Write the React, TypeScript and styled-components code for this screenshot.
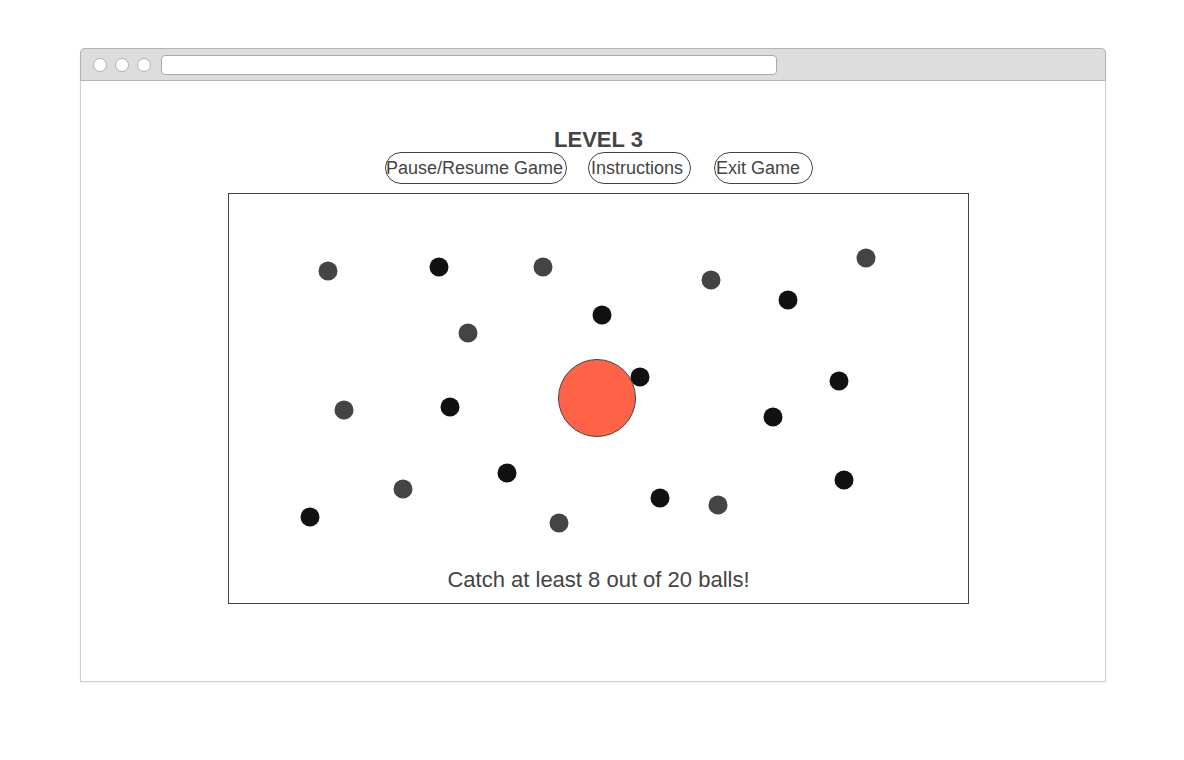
import React from "react";
import styled, { createGlobalStyle } from "styled-components";

const Global = createGlobalStyle`
  html, body { margin: 0; padding: 0; background: #fff; }
  body { font-family: "Liberation Sans", Arial, sans-serif; }
`;

const Page = styled.div`
  padding: 48px 0 0 80px;
  width: 1184px;
  height: 760px;
  box-sizing: border-box;
`;

const Window = styled.div`
  width: 1026px;
  height: 634px;
  box-sizing: border-box;
  border: 1px solid #cfcfcf;
  border-top: none;
  border-radius: 5px 5px 0 0;
  display: flex;
  flex-direction: column;
  box-shadow: 0 1px 3px rgba(0, 0, 0, 0.06);
`;

const TitleBar = styled.div`
  height: 33px;
  box-sizing: border-box;
  background: #dddddd;
  border: 1px solid #b4b4b4;
  margin: 0 -1px;
  border-radius: 5px 5px 0 0;
  display: flex;
  align-items: center;
  padding-left: 12px;
  gap: 8px;
`;

const Dot = styled.span`
  width: 14px;
  height: 14px;
  box-sizing: border-box;
  border-radius: 50%;
  background: #fff;
  border: 1px solid #b0b0b0;
`;

const Address = styled.div`
  margin-left: 2px;
  width: 616px;
  height: 20px;
  box-sizing: border-box;
  background: #fff;
  border: 1px solid #aaaaaa;
  border-radius: 4px;
`;

const Content = styled.div`
  padding: 46px 0 0 147px;
  display: flex;
  flex-direction: column;
  align-items: flex-start;
`;

const Column = styled.div`
  width: 741px;
  display: flex;
  flex-direction: column;
  align-items: center;
`;

const Heading = styled.h1`
  margin: 0;
  font-size: 22px;
  line-height: 25px;
  font-weight: bold;
  color: #444;
`;

const ButtonRow = styled.div`
  display: flex;
  align-items: center;
  margin-left: 1px;
`;

const GameButton = styled.button<{ $w: number; $pl: number; $gap: number }>`
  width: ${(p) => p.$w}px;
  height: 32px;
  margin-left: ${(p) => p.$gap}px;
  box-sizing: border-box;
  padding: 0 0 0 ${(p) => p.$pl}px;
  background: #fff;
  border: 1px solid #444;
  border-radius: 16px;
  font-family: "Liberation Sans", Arial, sans-serif;
  font-size: 18px;
  color: #444;
  text-align: left;
  white-space: nowrap;
  display: flex;
  align-items: center;
`;

const Board = styled.div`
  position: relative;
  margin-top: 9px;
  width: 741px;
  height: 411px;
  box-sizing: border-box;
  border: 1px solid #444;
  display: flex;
  flex-direction: column;
  justify-content: flex-end;
  align-items: center;
  padding-bottom: 11px;
`;

const Ball = styled.span<{ $dark: boolean }>`
  position: absolute;
  width: 19px;
  height: 19px;
  border-radius: 50%;
  background: ${(p) => (p.$dark ? "#111" : "#444")};
  transform: translate(-50%, -50%);
`;

const Catcher = styled.span`
  position: absolute;
  width: 78px;
  height: 78px;
  box-sizing: border-box;
  border-radius: 50%;
  background: #ff6347;
  border: 1px solid #444;
  transform: translate(-50%, -50%);
`;

const Goal = styled.div`
  font-size: 22px;
  line-height: 25px;
  color: #444;
`;

const OX = 229;
const OY = 194;

const balls: [number, number, boolean][] = [
  [328, 271, false],
  [543, 267, false],
  [711, 280, false],
  [866, 258, false],
  [468, 333, false],
  [344, 410, false],
  [403, 489, false],
  [559, 523, false],
  [718, 505, false],
  [439, 267, true],
  [788, 300, true],
  [602, 315, true],
  [640, 377, true],
  [450, 407, true],
  [839, 381, true],
  [773, 417, true],
  [507, 473, true],
  [310, 517, true],
  [660, 498, true],
  [844, 480, true],
];

export default function App() {
  return (
    <>
      <Global />
      <Page>
        <Window>
          <TitleBar>
            <Dot />
            <Dot />
            <Dot />
            <Address />
          </TitleBar>
          <Content>
            <Column>
              <Heading>LEVEL 3</Heading>
              <ButtonRow>
                <GameButton $w={182} $pl={0} $gap={0}>Pause/Resume Game</GameButton>
                <GameButton $w={103} $pl={2} $gap={21}>Instructions</GameButton>
                <GameButton $w={99} $pl={1} $gap={23}>Exit Game</GameButton>
              </ButtonRow>
              <Board>
                {balls.map(([x, y, d], i) => (
                  <Ball key={i} $dark={d} style={{ left: x - OX, top: y - OY }} />
                ))}
                <Catcher style={{ left: 597 - OX, top: 398 - OY }} />
                <Goal>Catch at least 8 out of 20 balls!</Goal>
              </Board>
            </Column>
          </Content>
        </Window>
      </Page>
    </>
  );
}
